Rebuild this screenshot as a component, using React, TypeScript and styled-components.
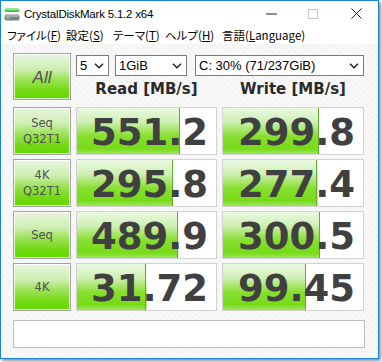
import React from 'react';
import styled, { createGlobalStyle } from 'styled-components';

const GlobalStyle = createGlobalStyle`
  html, body {
    margin: 0;
    padding: 0;
    background: #ffffff;
  }
  body {
    width: 382px;
    height: 362px;
    overflow: hidden;
  }
`;

const Window = styled.div`
  box-sizing: border-box;
  width: 379px;
  height: 359px;
  border: 1px solid #1883d7;
  box-shadow: 2px 2px 3px rgba(0, 0, 0, 0.45);
  display: flex;
  flex-direction: column;
  background: #ffffff;
  font-family: "Liberation Sans", Arial, sans-serif;
`;

const TitleBar = styled.div`
  height: 25px;
  display: flex;
  align-items: center;
  padding-left: 3px;
  background: #ffffff;
`;

const TitleText = styled.span`
  margin-left: 4px;
  font-size: 11.5px;
  letter-spacing: -0.2px;
  color: #000;
  flex: 1;
`;

const CaptionButton = styled.div<{ $w: number }>`
  width: ${(p) => p.$w}px;
  height: 25px;
  display: flex;
  align-items: center;
  justify-content: center;
`;

const MenuBar = styled.div`
  height: 18px;
  display: flex;
  align-items: center;
  padding-left: 6px;
  background: #ffffff;
  font-family: "Noto Sans CJK JP", "Liberation Sans", sans-serif;
  font-feature-settings: "palt";
  font-size: 11.5px;
  color: #000;
`;

const MenuItem = styled.span<{ $w?: number }>`
  width: ${(p) => (p.$w ? `${p.$w}px` : 'auto')};
  white-space: nowrap;
  u {
    text-decoration: underline;
    text-underline-offset: 1px;
  }
`;

const Client = styled.div`
  flex: 1;
  padding: 9px 11px 0 12px;
  background-color: #f6f6f6;
  background-image: repeating-linear-gradient(
    45deg,
    #f1f1f1 0px,
    #f1f1f1 1px,
    #f8f8f8 1px,
    #f8f8f8 4px
  );
`;

const Header = styled.div`
  display: grid;
  grid-template-columns: 58px 141px 142px;
  grid-template-rows: 24px 23px;
  column-gap: 5px;
`;

const greenButton = `
  box-sizing: border-box;
  border: 1px solid #a4a4a4;
  box-shadow: inset 0 0 0 1px rgba(255, 255, 255, 0.75);
  background: linear-gradient(
    to bottom,
    #e9f6e0 0%,
    #cdeeb0 35%,
    #9fe35d 55%,
    #74da14 80%,
    #62d800 100%
  );
  color: #505050;
  display: flex;
  flex-direction: column;
  align-items: center;
  justify-content: center;
`;

const AllButton = styled.div`
  ${greenButton}
  grid-row: 1 / span 2;
  font-size: 17px;
  font-style: italic;
  padding-top: 2px;
`;

const SelectRow = styled.div`
  grid-column: 2 / span 2;
  display: flex;
  align-items: flex-start;
  padding-top: 2px;
`;

const Select = styled.div<{ $w: number; $gap?: number }>`
  box-sizing: border-box;
  width: ${(p) => p.$w}px;
  margin-right: ${(p) => p.$gap ?? 0}px;
  height: 21px;
  border: 1px solid #7a7a7a;
  background: #ffffff;
  display: flex;
  align-items: center;
  justify-content: space-between;
  padding: 0 4px 0 3px;
  font-size: 13px;
  color: #000;
`;

const Heading = styled.div`
  grid-row: 2;
  text-align: center;
  font-family: "DejaVu Sans", Verdana, sans-serif;
  font-weight: bold;
  font-size: 15px;
  line-height: 23px;
  padding-top: 1px;
  color: #2a2a2a;
`;

const Results = styled.div`
  display: grid;
  grid-template-columns: 58px 141px 142px;
  grid-auto-rows: 48px;
  gap: 4px 5px;
  margin-top: 7px;
`;

const TestButton = styled.div`
  ${greenButton}
  font-family: "DejaVu Sans", Verdana, sans-serif;
  font-size: 11.5px;
  line-height: 16px;
`;

const Cell = styled.div<{ $fill: number }>`
  box-sizing: border-box;
  border: 1px solid #d2d2d2;
  display: flex;
  align-items: center;
  justify-content: flex-end;
  padding: 2px 8px 0 0;
  font-family: "DejaVu Sans", Verdana, sans-serif;
  font-weight: bold;
  font-size: 37px;
  color: #404040;
  background:
    linear-gradient(
        to right,
        transparent calc(${(p) => p.$fill}% - 1px),
        #5fae2c calc(${(p) => p.$fill}% - 1px),
        #5fae2c ${(p) => p.$fill}%,
        transparent ${(p) => p.$fill}%
      ),
    linear-gradient(
        to bottom,
        #eaf8e2 0%,
        #cff0b6 30%,
        #a6e567 48%,
        #86df2e 62%,
        #78db1a 88%,
        #9ae55a 100%
      )
      0 0 / ${(p) => p.$fill}% 100% no-repeat,
    #ffffff;
`;

const Message = styled.div`
  box-sizing: border-box;
  margin-top: 9px;
  width: 352px;
  height: 28px;
  border: 1px solid #bdbdbd;
  background: #ffffff;
`;

const Chevron = () => (
  <svg width="10" height="6" viewBox="0 0 10 6">
    <polyline points="1,0.8 5,4.8 9,0.8" fill="none" stroke="#1a1a1a" strokeWidth="1.3" />
  </svg>
);

const AppIcon = () => (
  <svg width="16" height="16" viewBox="0 0 16 16">
    <rect x="0.5" y="2.5" width="15" height="3.5" rx="1.75" fill="#3cc43c" />
    <rect x="1" y="3" width="14" height="1.2" rx="0.6" fill="#8fe88f" />
    <rect x="0.5" y="8.5" width="15" height="6" rx="2" fill="#7d8285" />
    <rect x="1" y="9" width="14" height="2" rx="1" fill="#a9adb0" />
    <rect x="2.5" y="10.5" width="3" height="2" rx="1" fill="#6fe26f" />
  </svg>
);

const rows = [
  { label: ['Seq', 'Q32T1'], read: '551.2', readFill: 74, write: '299.8', writeFill: 68.5 },
  { label: ['4K', 'Q32T1'], read: '295.8', readFill: 69, write: '277.4', writeFill: 67.5 },
  { label: ['Seq'], read: '489.9', readFill: 73, write: '300.5', writeFill: 69 },
  { label: ['4K'], read: '31.72', readFill: 50, write: '99.45', writeFill: 59 },
];

const App: React.FC = () => {
  return (
    <>
      <GlobalStyle />
      <Window>
        <TitleBar>
          <AppIcon />
          <TitleText>CrystalDiskMark 5.1.2 x64</TitleText>
          <CaptionButton $w={42}>
            <svg width="11" height="2" viewBox="0 0 11 2">
              <line x1="0" y1="1" x2="11" y2="1" stroke="#222" strokeWidth="1" />
            </svg>
          </CaptionButton>
          <CaptionButton $w={42}>
            <svg width="10" height="10" viewBox="0 0 10 10">
              <rect x="0.5" y="0.5" width="9" height="9" fill="none" stroke="#c4c4c4" strokeWidth="1" />
            </svg>
          </CaptionButton>
          <CaptionButton $w={44}>
            <svg width="11" height="11" viewBox="0 0 11 11">
              <path d="M0.5 0.5 L10.5 10.5 M10.5 0.5 L0.5 10.5" stroke="#222" strokeWidth="1" />
            </svg>
          </CaptionButton>
        </TitleBar>
        <MenuBar>
          <MenuItem $w={59}>
            ファイル(<u>F</u>)
          </MenuItem>
          <MenuItem $w={47}>
            設定(<u>S</u>)
          </MenuItem>
          <MenuItem $w={52}>
            テーマ(<u>T</u>)
          </MenuItem>
          <MenuItem $w={57}>
            ヘルプ(<u>H</u>)
          </MenuItem>
          <MenuItem>
            言語(<u>L</u>anguage)
          </MenuItem>
        </MenuBar>
        <Client>
          <Header>
            <AllButton>All</AllButton>
            <SelectRow>
              <Select $w={33} $gap={6}>
                5<Chevron />
              </Select>
              <Select $w={72} $gap={8}>
                1GiB<Chevron />
              </Select>
              <Select $w={169}>
                C: 30% (71/237GiB)<Chevron />
              </Select>
            </SelectRow>
            <Heading>Read [MB/s]</Heading>
            <Heading>Write [MB/s]</Heading>
          </Header>
          <Results>
            {rows.map((r, i) => (
              <React.Fragment key={i}>
                <TestButton>
                  {r.label.map((l) => (
                    <span key={l}>{l}</span>
                  ))}
                </TestButton>
                <Cell $fill={r.readFill}>{r.read}</Cell>
                <Cell $fill={r.writeFill}>{r.write}</Cell>
              </React.Fragment>
            ))}
          </Results>
          <Message />
        </Client>
      </Window>
    </>
  );
};

export default App;
